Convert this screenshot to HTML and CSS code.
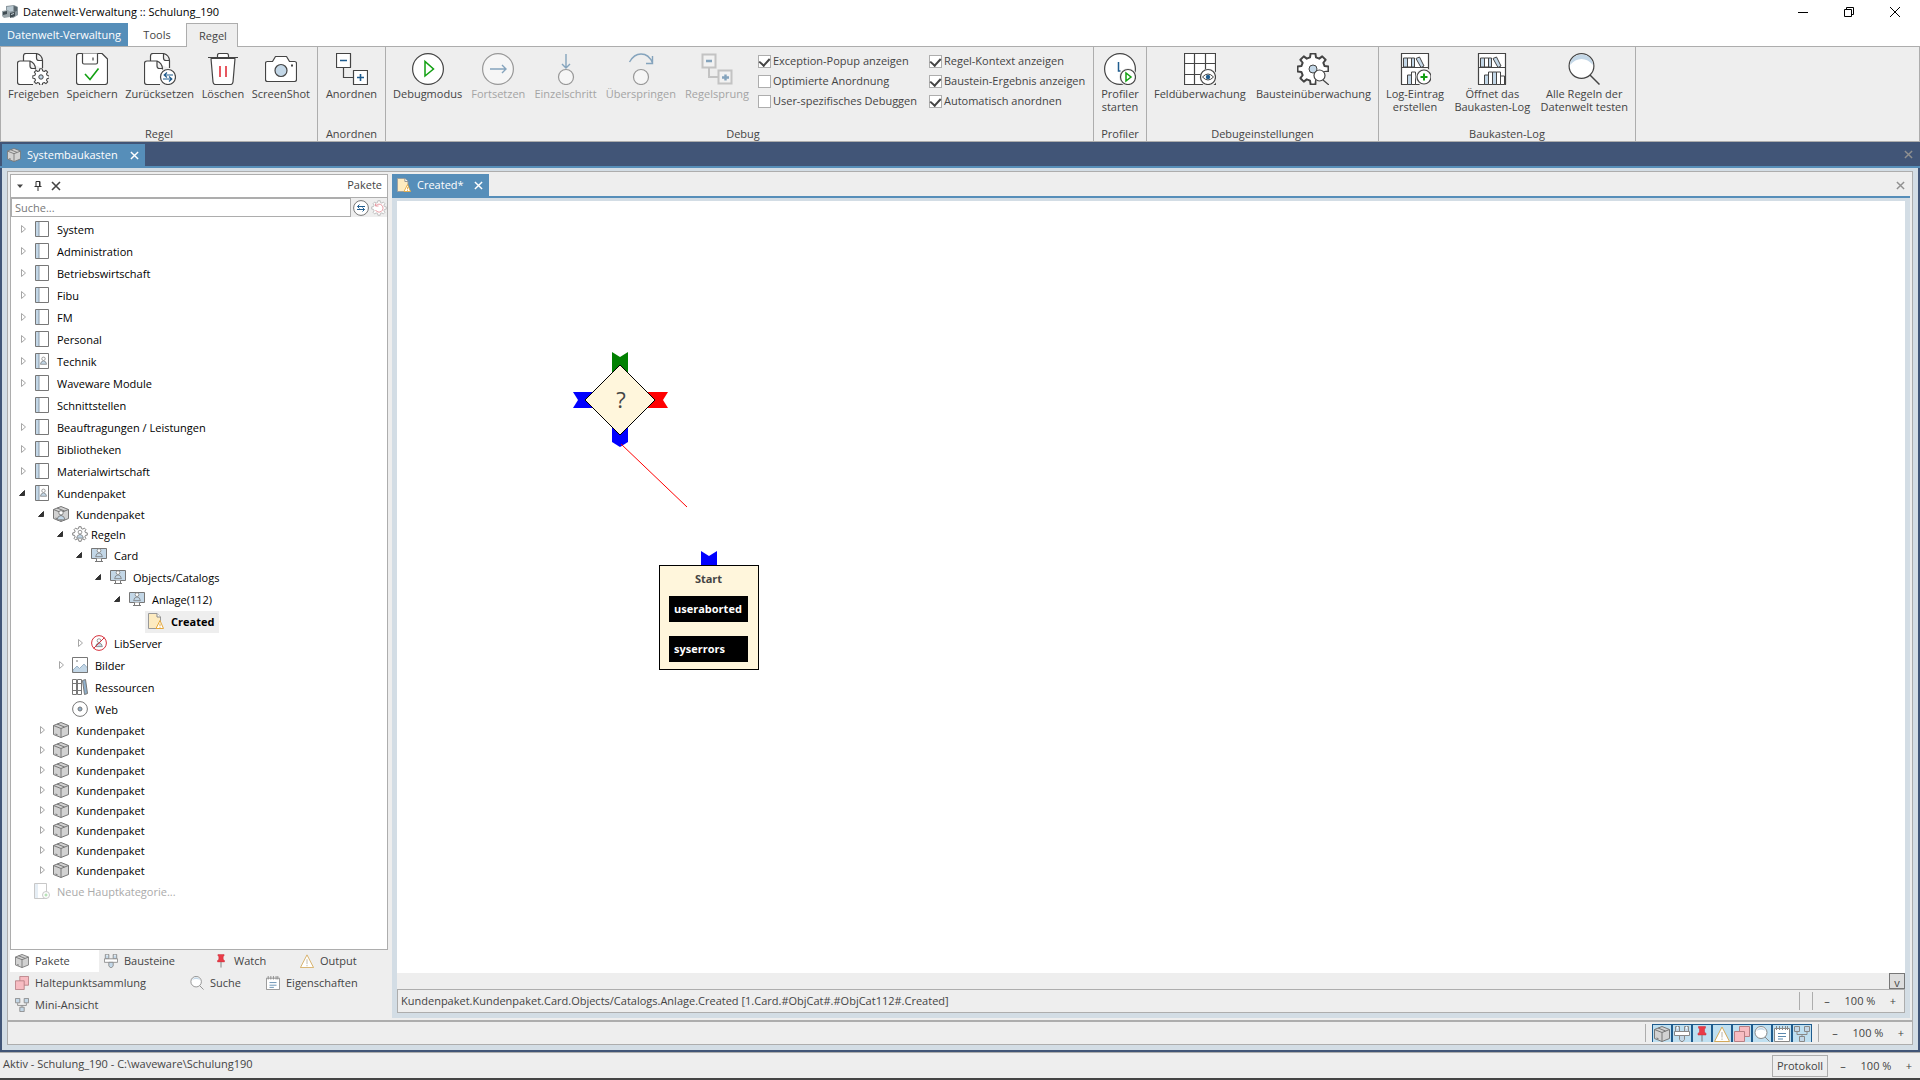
FILE: index.html
```html
<!DOCTYPE html>
<html lang="de">
<head>
  <meta charset="UTF-8">
  <meta name="viewport" content="width=device-width, initial-scale=1.0">
  <title>Datenwelt-Verwaltung :: Schulung_190</title>
  <link rel="stylesheet" href="styles.css">
</head>
<body>
  <!-- Icon sprite -->
  <svg class="sprite" aria-hidden="true">
    <symbol id="i-app" viewBox="0 0 16 16">
      <path d="M4 2l8-1 4 2v8l-5 3-7-3z" fill="#8b989f"/>
      <path d="M5 3l6-1v5L5 8z" fill="#b9c8d1"/>
      <path d="M12 2l3 1v4l-3 1z" fill="#5a676e"/>
      <path d="M0 7l6-1 2 2v5l-6 1-2-2z" fill="#9aa5aa"/>
      <path d="M1 8l4-1v3l-4 1zM8 9l5-1v4l-5 2z" fill="#3f4b52"/>
      <path d="M9 10l3-1v1l-3 1z" fill="#c9d4d9"/>
    </symbol>
    <symbol id="i-gear" viewBox="0 0 24 24">
      <path d="M9.9 3.8L10.3 1.1H13.7L14.1 3.8 16.4 4.7 18.5 3.1 20.9 5.5 19.3 7.6 20.2 9.9 22.9 10.3V13.7L20.2 14.1 19.3 16.4 20.9 18.5 18.5 20.9 16.4 19.3 14.1 20.2 13.7 22.9H10.3L9.9 20.2 7.6 19.3 5.5 20.9 3.1 18.5 4.7 16.4 3.8 14.1 1.1 13.7V10.3L3.8 9.9 4.7 7.6 3.1 5.5 5.5 3.1 7.6 4.7z" fill="#fff" stroke="currentColor" stroke-width="1.4" stroke-linejoin="round"/>
    </symbol>
    <symbol id="i-docs" viewBox="0 0 32 32">
      <path class="ln" d="M6.5 8V3q0-2.5 2.5-2.5H19.5q5.5 1.5 6 7V15M19.5.5V5q0 2.500 2.5 2.5h4M16 31.5H3q-2.5 0-2.5-2.5V10.5Q.5 8 3 8H13q5 2 5.5 7.5v1M13 8v5q0 2.5 2.5 2.5h3"/>
    </symbol>
    <symbol id="i-release" viewBox="0 0 32 32">
      <use href="#i-docs" width="32" height="32"/>
      <use href="#i-gear" x="15" y="15" width="18" height="18"/>
      <circle cx="24" cy="24" r="2.2" fill="#c3d7e7" stroke="#444"/>
    </symbol>
    <symbol id="i-save" viewBox="0 0 32 32">
      <path class="ln" d="M3 .5H26L31.5 6V29q0 2.5-2.5 2.5H3Q.5 31.5.5 29V3Q.5.5 3 .5z"/>
      <path class="ln" d="M6.5.5v9q0 1.5 1.5 1.5H20q1.5 0 1.5-1.5v-9M17 4.5v3"/>
      <path d="M9 21l5 5.5 8.500-11" fill="none" stroke="#12a012" stroke-width="1.6"/>
    </symbol>
    <symbol id="i-reset" viewBox="0 0 32 32">
      <use href="#i-docs" width="32" height="32"/>
      <circle class="ln" cx="24" cy="24" r="7.5"/>
      <path d="M29 22h-9m3-2.5L20.2 22l2.800 2.5M19 26h9m-3-2.5l2.8 2.5-2.8 2.5" fill="none" stroke="#1f5c8e" stroke-width="1.2"/>
    </symbol>
    <symbol id="i-trash" viewBox="0 0 32 32">
      <path class="ln" d="M4 5.5l2 23.500q.3 2.500 2.5 2.500h15q2.200 0 2.500-2.500l2-23.5z"/>
      <path class="ln" d="M1 4.5H31M10.5 4V2.5q0-2 2-2h7q2 0 2 2V4"/>
      <path d="M13 13v11M19 13v11" stroke="#e0202c" stroke-width="1.5"/>
    </symbol>
    <symbol id="i-camera" viewBox="0 0 32 32">
      <path class="ln" d="M2.5 8.5H7.5L10.5 3.5H21.5L24.5 8.5H29.5q2 0 2 2V26.5q0 2-2 2H2.5q-2 0-2-2V10.5q0-2 2-2z"/>
      <circle cx="16" cy="17.5" r="6" fill="#c3d7e7" stroke="#444" stroke-width="1.2"/>
      <path d="M26 12.5h2" stroke="#444" stroke-width="2"/>
    </symbol>
    <symbol id="i-arrange" viewBox="0 0 32 32">
      <path class="ln" d="M.5.5h14v14H.5zM17.5 17.5h14v14h-14z"/>
      <path d="M7.5 14.5v10h10" fill="none" stroke="#444" stroke-width="1.2"/>
      <path d="M4 7.5h7M21 24.5h7M24.5 21v7" stroke="#1f5c8e" stroke-width="1.6"/>
    </symbol>
    <symbol id="i-debug" viewBox="0 0 32 32">
      <circle class="ln" cx="16" cy="16" r="15.4"/>
      <path d="M13 8.5V23L21.5 16z" fill="none" stroke="#12a012" stroke-width="1.5"/>
    </symbol>
    <symbol id="i-continue" viewBox="0 0 32 32">
      <circle class="ln" cx="16" cy="16" r="15.4"/>
      <path d="M8 16H24M20 12l4 4-4 4" fill="none" stroke="#1f5c8e" stroke-width="1.4"/>
    </symbol>
    <symbol id="i-step" viewBox="0 0 32 32">
      <circle class="ln" cx="16" cy="24" r="7.5"/>
      <path d="M16 1V15M12 11l4 4 4-4" fill="none" stroke="#1f5c8e" stroke-width="1.4"/>
    </symbol>
    <symbol id="i-over" viewBox="0 0 32 32">
      <circle class="ln" cx="16" cy="24" r="7.5"/>
      <path d="M4.5 9Q9 1 16 1q8 0 11.5 9M27.5 3v7.5H21" fill="none" stroke="#1f5c8e" stroke-width="1.4"/>
    </symbol>
    <symbol id="i-jump" viewBox="0 0 32 32">
      <path d="M8 14.5V24h10" fill="none" stroke="#999" stroke-width="2"/>
      <path d="M1.5 1.5h13v13h-13zM17.5 17.5h13v13h-13z" fill="#f6f6f6" stroke="#999" stroke-width="2"/>
      <path d="M5 8h6M21 24.500h7M24.500 21.5v6" stroke="#1f5c8e" stroke-width="2.4"/>
    </symbol>
    <symbol id="i-profiler" viewBox="0 0 32 32">
      <circle class="ln" cx="16" cy="16" r="15.4"/>
      <path d="M14.5 9v9h2" fill="none" stroke="#1f5c8e" stroke-width="1.5"/>
      <circle cx="24" cy="24" r="9" fill="#eee"/>
      <circle class="ln" cx="24" cy="24" r="7.5"/>
      <path d="M22 20v8l5-4z" fill="none" stroke="#12a012" stroke-width="1.5"/>
    </symbol>
    <symbol id="i-grid" viewBox="0 0 32 32">
      <path class="ln" d="M.5.5h31v31H.5zM.5 10.5h31M.5 21.5h31M10.5.5v31M21.5.5v31"/>
      <circle cx="24.5" cy="24.5" r="9" fill="#eee"/>
      <circle class="ln" cx="24" cy="24" r="7.5"/>
      <path d="M18.5 24q5.5-6 11 0-5.500 6-11 0z" fill="#fff" stroke="#444"/>
      <circle cx="24" cy="24" r="2.2" fill="#1f5c8e"/>
    </symbol>
    <symbol id="i-gearwatch" viewBox="0 0 32 32">
      <use href="#i-gear" x="-1" y="-1" width="34" height="34"/>
      <circle cx="16" cy="16" r="4" fill="#c3d7e7" stroke="#444"/>
      <path d="M18 19h14v13H20z" fill="#eee"/>
      <path d="M26 27l6 5" stroke="#444" stroke-width="1.3"/>
      <circle class="ln" cx="22.5" cy="22.5" r="5.5"/>
    </symbol>
    <symbol id="i-shelf" viewBox="0 0 32 32">
      <path class="ln" d="M2.5.5h27v31h-27zM2.5 14.5h27"/>
      <path d="M4.5 5h4v9h-4zM12.5 5h3v9h-3zM17 5.5l3.5-1.5 4.5 9-3 1.5zM8.5 22h4v9.5h-4zM16.5 19h4v12.5h-4z" fill="#c3d7e7" stroke="#444"/>
      <path d="M8.5 5h4v9h-4zM12.5 19h4v12.5h-4zM20.5 19h4v12.5h-4zM24.5 23h4v8.5h-4z" fill="#fff" stroke="#444"/>
    </symbol>
    <symbol id="i-logadd" viewBox="0 0 32 32">
      <path class="ln" d="M2.5.5h27v31h-27zM2.5 14.5h27"/>
      <path d="M4.5 5h4v9h-4zM12.5 5h3v9h-3zM17 5.5l3.5-1.5 4.5 9-3 1.5zM8.5 22h4v9.5h-4z" fill="#c3d7e7" stroke="#444"/>
      <path d="M8.5 5h4v9h-4zM12.5 19h4v12.5h-4z" fill="#fff" stroke="#444"/>
      <circle cx="25.5" cy="24" r="9" fill="#eee"/>
      <circle class="ln" cx="25" cy="24" r="7"/>
      <path d="M21.5 24h7M25 20.5v7" stroke="#12a012" stroke-width="2"/>
    </symbol>
    <symbol id="i-search" viewBox="0 0 32 32">
      <circle cx="13.5" cy="13" r="12.4" fill="#fff" stroke="#444" stroke-width="1.2"/>
      <path d="M2 12Q3 2 13.5 1.5 24 2 25 12 20 6 13.5 6 7 6 2 12z" fill="#c3d7e7"/>
      <path d="M22 22l9.5 9.5" stroke="#444" stroke-width="1.5"/>
    </symbol>
    <symbol id="i-swap" viewBox="0 0 16 16">
      <circle cx="8" cy="8" r="7.4" fill="#fff" stroke="#777"/>
      <path d="M12 6.5H4.5M6.5 4.5l-2 2 2 2M4 9.5h7.5M9.5 7.5l2 2-2 2" fill="none" stroke="#1f5c8e"/>
    </symbol>
    <symbol id="i-reload" viewBox="0 0 16 16">
      <g color="#bbb"><use href="#i-gear" width="16" height="16"/></g>
      <path d="M5 5.5A4 4 0 1 1 4.5 10M4.5 3.5v2.5H7.5" fill="none" stroke="#e79aa2"/>
    </symbol>
    <symbol id="i-book" viewBox="0 0 16 16">
      <path d="M1.5.5h13v15h-13z" fill="#fff" stroke="#777"/>
      <path d="M2 1h3v14H2z" fill="#c3d7e7"/><path d="M5 1v14" stroke="#8a9aa8"/>
    </symbol>
    <symbol id="i-man" viewBox="0 0 16 16">
      <path d="M3.500 13.5Q4 9 8 8.5q4 .5 4.500 5z" fill="#c3d7e7" stroke="#777"/>
      <circle cx="8" cy="5.5" r="2.5" fill="#fff" stroke="#777"/>
    </symbol>
    <symbol id="i-bookman" viewBox="0 0 16 16">
      <use href="#i-book" width="16" height="16"/>
      <use href="#i-man" x="4" y="2" width="11" height="11"/>
    </symbol>
    <symbol id="i-box" viewBox="0 0 16 16">
      <path d="M.5 3.5L8 .5l7.5 3v9L8 15.5l-7.5-3z" fill="#d2d2d2" stroke="#777"/>
      <path d="M.5 3.5L8 6.5l7.5-3M8 6.5v9M4 2l7.5 3" fill="none" stroke="#777"/>
      <path d="M2.5 12l2 .7" stroke="#777"/>
    </symbol>
    <symbol id="i-boxman" viewBox="0 0 16 16">
      <use href="#i-box" width="16" height="16"/>
      <use href="#i-man" x="1" y="2" width="14" height="14"/>
    </symbol>
    <symbol id="i-gearman" viewBox="0 0 16 16">
      <g color="#777"><use href="#i-gear" width="16" height="16"/></g>
      <use href="#i-man" x="2" y="2" width="12" height="12"/>
    </symbol>
    <symbol id="i-screen" viewBox="0 0 16 16">
      <path d="M.5 1.5h15v10H.5z" fill="#c3d7e7" stroke="#777"/>
      <path d="M5.5 11.5v3h5v-3M4 14.5h8" fill="#fff" stroke="#777"/>
      <use href="#i-man" x="2" y="-1" width="12" height="13"/>
    </symbol>
    <symbol id="i-rule" viewBox="0 0 16 16">
      <path d="M.5.5H9l3.5 3.500v11.5H.5z" fill="#fdebc0" stroke="#999"/>
      <path d="M9 .5V4h3.5" fill="#fff" stroke="#888"/>
      <path d="M12 7.5l3.5 8h-7.5z" fill="#fff" stroke="#e5a83c"/>
      <path d="M12 10.5v2.5M12 13.7v1" stroke="#e5a83c"/>
    </symbol>
    <symbol id="i-noman" viewBox="0 0 16 16">
      <circle cx="8" cy="8" r="7.4" fill="#fff" stroke="#d6303c"/>
      <use href="#i-man" x="2" y="1" width="12" height="13"/>
      <path d="M2.5 13.5l11-11" stroke="#d6303c"/>
    </symbol>
    <symbol id="i-image" viewBox="0 0 16 16">
      <path d="M1 13l4-4 2.5 2.5L12 7l3.5 4v4.5H1z" fill="#c3d7e7" stroke="#9bb2c6"/>
      <path d="M.5.5h15v15H.5z" fill="none" stroke="#777"/>
      <path d="M4 4h2" stroke="#777"/>
    </symbol>
    <symbol id="i-books" viewBox="0 0 16 16">
      <path d="M.5.5h4v15h-4zM5.5.5h4v15h-4zM1 4.5h3.5M6 4.5h3.5M1 11.5h3.5M6 11.5h3.5" fill="#fff" stroke="#777"/>
      <path d="M10.5 1.5l3-1 2 14-3 1z" fill="#8fb0cc" stroke="#777"/>
    </symbol>
    <symbol id="i-web" viewBox="0 0 16 16">
      <circle cx="8" cy="8" r="7.4" fill="#fff" stroke="#777"/>
      <circle cx="8" cy="8" r="2" fill="#8fb0cc" stroke="#777"/>
    </symbol>
    <symbol id="i-newbook" viewBox="0 0 16 16">
      <path d="M.5.5h12v15H.5z" fill="#fff" stroke="#777"/>
      <path d="M1 1h3v14H1z" fill="#c3d7e7"/>
      <circle cx="12" cy="12" r="3.5" fill="#fff" stroke="#777"/>
      <path d="M10.5 12h3M12 10.5v3" stroke="#12a012"/>
    </symbol>
    <symbol id="i-blocks" viewBox="0 0 16 16">
      <path d="M1.5.5h4v5h-4zM10.5.5h4v5h-4z" fill="#c3d7e7" stroke="#888"/>
      <path d="M3 .5h1v2H3zM12 .5h1v2h-1z" fill="#fff"/>
      <path d="M.5 5.5h15v4H.5z" fill="#fff" stroke="#888"/>
      <path d="M5.5 9.5h5v4l-1.5 2H7l-1.5-2z" fill="#c3d7e7" stroke="#888"/>
    </symbol>
    <symbol id="i-pin" viewBox="0 0 16 16">
      <path d="M4.5.5h7v1.5l-1 1v3l1.5 1.5V9H4V7.5L5.5 6V3l-1-1z" fill="#ea3b47" stroke="#c42f3a" stroke-width=".5"/>
      <path d="M8 9v6.5" stroke="#777"/>
    </symbol>
    <symbol id="i-warn" viewBox="0 0 16 16">
      <path d="M8 1L15.5 15.5H.5z" fill="#fff" stroke="#d3a95a"/>
      <path d="M8 6v5.5M8 12.5v1.5" stroke="#b9b2a4"/>
    </symbol>
    <symbol id="i-breaks" viewBox="0 0 16 16">
      <path d="M5.5.5h10v10h-10z" fill="#f7bcc2" stroke="#b77f84"/>
      <path d="M.5 5.5h10v10H.5z" fill="#f7bcc2" stroke="#b77f84"/>
    </symbol>
    <symbol id="i-lens" viewBox="0 0 16 16">
      <path d="M11 11l4.5 4.5" stroke="#888"/>
      <circle cx="7" cy="6.5" r="6" fill="#fff" stroke="#888"/>
      <path d="M2 5q5-7 10 0-5-3-10 0z" fill="#c3d7e7"/>
    </symbol>
    <symbol id="i-props" viewBox="0 0 16 16">
      <path d="M.5 2.5h15v13H.5z" fill="#fff" stroke="#888"/>
      <path d="M2.5 0v4M5.5 0v4M8.5 0v4M11.5 0v4M13.5 0v4" stroke="#888"/>
      <path d="M4 7.5h8M4 10.5h8M4 13h5" stroke="#5b88ad"/>
    </symbol>
    <symbol id="i-mini" viewBox="0 0 16 16">
      <path d="M3 6v2.5h10V6M8 8.5V11" fill="none" stroke="#888"/>
      <path d="M.5.5h5v5h-5zM10.5.5h5v5h-5zM5.5 10.5h5v5h-5z" fill="#c3d7e7" stroke="#888"/>
    </symbol>
    <symbol id="i-x" viewBox="0 0 10 10"><path d="M1 1l8 8M9 1L1 9" stroke="currentColor" stroke-width="1.6"/></symbol>
    <symbol id="i-closed" viewBox="0 0 14 14"><path d="M5.5 3.5v7l4-3.5z" fill="#fff" stroke="#a6a6a6"/></symbol>
    <symbol id="i-open" viewBox="0 0 14 14"><path d="M8.5 4.5v5H3.500z" fill="#333" stroke="#333"/></symbol>
  </svg>

  <header class="titlebar">
    <svg class="icon"><use href="#i-app"/></svg>
    <h1 class="title">Datenwelt-Verwaltung :: Schulung_190</h1>
    <div class="window-buttons">
      <button aria-label="Minimieren"><svg viewBox="0 0 10 10"><path d="M0 5.5h10" stroke="#000"/></svg></button>
      <button aria-label="Wiederherstellen"><svg viewBox="0 0 10 10"><path d="M.5 2.5h7v7h-7zM2.5 2.5v-2h7v7h-2" fill="none" stroke="#000"/></svg></button>
      <button aria-label="Schließen"><svg viewBox="0 0 10 10"><path d="M0 0l10 10M10 0L0 10" stroke="#000"/></svg></button>
    </div>
  </header>

  <nav class="menu">
    <button class="menu-tab menu-main">Datenwelt-Verwaltung</button>
    <button class="menu-tab menu-tools">Tools</button>
    <button class="menu-tab menu-active">Regel</button>
  </nav>

  <div class="ribbon">
    <section class="group group-rule">
      <div class="tools">
        <button class="tool"><svg><use href="#i-release"/></svg>Freigeben</button>
        <button class="tool"><svg><use href="#i-save"/></svg>Speichern</button>
        <button class="tool"><svg><use href="#i-reset"/></svg>Zurücksetzen</button>
        <button class="tool"><svg><use href="#i-trash"/></svg>Löschen</button>
        <button class="tool"><svg><use href="#i-camera"/></svg>ScreenShot</button>
      </div>
      <h2>Regel</h2>
    </section>
    <section class="group group-arrange">
      <div class="tools">
        <button class="tool"><svg><use href="#i-arrange"/></svg>Anordnen</button>
      </div>
      <h2>Anordnen</h2>
    </section>
    <section class="group group-debug">
      <div class="tools">
        <button class="tool"><svg><use href="#i-debug"/></svg>Debugmodus</button>
        <button class="tool" disabled><svg><use href="#i-continue"/></svg>Fortsetzen</button>
        <button class="tool" disabled><svg><use href="#i-step"/></svg>Einzelschritt</button>
        <button class="tool" disabled><svg><use href="#i-over"/></svg>Überspringen</button>
        <button class="tool" disabled><svg><use href="#i-jump"/></svg>Regelsprung</button>
        <div class="checks">
          <label><input type="checkbox" checked>Exception-Popup anzeigen</label>
          <label><input type="checkbox" checked>Regel-Kontext anzeigen</label>
          <label><input type="checkbox">Optimierte Anordnung</label>
          <label><input type="checkbox" checked>Baustein-Ergebnis anzeigen</label>
          <label><input type="checkbox">User-spezifisches Debuggen</label>
          <label><input type="checkbox" checked>Automatisch anordnen</label>
        </div>
      </div>
      <h2>Debug</h2>
    </section>
    <section class="group group-profiler">
      <div class="tools">
        <button class="tool"><svg><use href="#i-profiler"/></svg>Profiler<br>starten</button>
      </div>
      <h2>Profiler</h2>
    </section>
    <section class="group group-watch">
      <div class="tools">
        <button class="tool"><svg><use href="#i-grid"/></svg>Feldüberwachung</button>
        <button class="tool"><svg><use href="#i-gearwatch"/></svg>Bausteinüberwachung</button>
      </div>
      <h2>Debugeinstellungen</h2>
    </section>
    <section class="group group-log">
      <div class="tools">
        <button class="tool"><svg><use href="#i-logadd"/></svg>Log-Eintrag<br>erstellen</button>
        <button class="tool"><svg><use href="#i-shelf"/></svg>Öffnet das<br>Baukasten-Log</button>
        <button class="tool"><svg><use href="#i-search"/></svg>Alle Regeln der<br>Datenwelt testen</button>
      </div>
      <h2>Baukasten-Log</h2>
    </section>
  </div>

  <div class="docbar">
    <div class="doc-tab">
      <svg class="icon-sm"><use href="#i-box"/></svg>
      <span>Systembaukasten</span>
      <button class="close" aria-label="Schließen"><svg><use href="#i-x"/></svg></button>
    </div>
    <button class="close close-all" aria-label="Alle schließen"><svg><use href="#i-x"/></svg></button>
  </div>

  <div class="workspace">
    <div class="frame">
      <div class="main">
        <aside class="sidebar">
          <div class="panel">
            <div class="panel-head">
              <button aria-label="Menü"><svg viewBox="0 0 10 10"><path d="M2 3.5h6L5 7z" fill="#444"/></svg></button>
              <button aria-label="Anheften"><svg viewBox="0 0 10 10"><path d="M3 .5h4v5H3zM1.5 5.5h7M5 5.5V10M6.5.5v5" fill="none" stroke="#333"/></svg></button>
              <button aria-label="Schließen"><svg><use href="#i-x"/></svg></button>
              <h2>Pakete</h2>
            </div>
            <div class="search">
              <input type="text" placeholder="Suche..." aria-label="Suche">
              <button aria-label="Wechseln"><svg class="icon"><use href="#i-swap"/></svg></button>
              <button aria-label="Neu laden"><svg class="icon"><use href="#i-reload"/></svg></button>
            </div>
            <ul class="tree">
              <li><svg class="arrow"><use href="#i-closed"/></svg><svg class="icon"><use href="#i-book"/></svg>System</li>
              <li><svg class="arrow"><use href="#i-closed"/></svg><svg class="icon"><use href="#i-book"/></svg>Administration</li>
              <li><svg class="arrow"><use href="#i-closed"/></svg><svg class="icon"><use href="#i-book"/></svg>Betriebswirtschaft</li>
              <li><svg class="arrow"><use href="#i-closed"/></svg><svg class="icon"><use href="#i-book"/></svg>Fibu</li>
              <li><svg class="arrow"><use href="#i-closed"/></svg><svg class="icon"><use href="#i-book"/></svg>FM</li>
              <li><svg class="arrow"><use href="#i-closed"/></svg><svg class="icon"><use href="#i-book"/></svg>Personal</li>
              <li><svg class="arrow"><use href="#i-closed"/></svg><svg class="icon"><use href="#i-bookman"/></svg>Technik</li>
              <li><svg class="arrow"><use href="#i-closed"/></svg><svg class="icon"><use href="#i-book"/></svg>Waveware Module</li>
              <li><svg class="arrow"></svg><svg class="icon"><use href="#i-book"/></svg>Schnittstellen</li>
              <li><svg class="arrow"><use href="#i-closed"/></svg><svg class="icon"><use href="#i-book"/></svg>Beauftragungen / Leistungen</li>
              <li><svg class="arrow"><use href="#i-closed"/></svg><svg class="icon"><use href="#i-book"/></svg>Bibliotheken</li>
              <li><svg class="arrow"><use href="#i-closed"/></svg><svg class="icon"><use href="#i-book"/></svg>Materialwirtschaft</li>
              <li><svg class="arrow"><use href="#i-open"/></svg><svg class="icon"><use href="#i-bookman"/></svg>Kundenpaket</li>
              <li class="l1 package"><svg class="arrow"><use href="#i-open"/></svg><svg class="icon"><use href="#i-boxman"/></svg>Kundenpaket</li>
              <li class="l2 package rules"><svg class="arrow"><use href="#i-open"/></svg><svg class="icon"><use href="#i-gearman"/></svg>Regeln</li>
              <li class="l3"><svg class="arrow"><use href="#i-open"/></svg><svg class="icon"><use href="#i-screen"/></svg>Card</li>
              <li class="l4"><svg class="arrow"><use href="#i-open"/></svg><svg class="icon"><use href="#i-screen"/></svg>Objects/Catalogs</li>
              <li class="l5"><svg class="arrow"><use href="#i-open"/></svg><svg class="icon"><use href="#i-screen"/></svg>Anlage(112)</li>
              <li class="l6"><span class="selected"><svg class="icon"><use href="#i-rule"/></svg>Created</span></li>
              <li class="l3"><svg class="arrow"><use href="#i-closed"/></svg><svg class="icon"><use href="#i-noman"/></svg>LibServer</li>
              <li class="l2"><svg class="arrow"><use href="#i-closed"/></svg><svg class="icon"><use href="#i-image"/></svg>Bilder</li>
              <li class="l2"><svg class="arrow"></svg><svg class="icon"><use href="#i-books"/></svg>Ressourcen</li>
              <li class="l2"><svg class="arrow"></svg><svg class="icon"><use href="#i-web"/></svg>Web</li>
              <li class="l1 package"><svg class="arrow"><use href="#i-closed"/></svg><svg class="icon"><use href="#i-box"/></svg>Kundenpaket</li>
              <li class="l1 package"><svg class="arrow"><use href="#i-closed"/></svg><svg class="icon"><use href="#i-box"/></svg>Kundenpaket</li>
              <li class="l1 package"><svg class="arrow"><use href="#i-closed"/></svg><svg class="icon"><use href="#i-box"/></svg>Kundenpaket</li>
              <li class="l1 package"><svg class="arrow"><use href="#i-closed"/></svg><svg class="icon"><use href="#i-box"/></svg>Kundenpaket</li>
              <li class="l1 package"><svg class="arrow"><use href="#i-closed"/></svg><svg class="icon"><use href="#i-box"/></svg>Kundenpaket</li>
              <li class="l1 package"><svg class="arrow"><use href="#i-closed"/></svg><svg class="icon"><use href="#i-box"/></svg>Kundenpaket</li>
              <li class="l1 package"><svg class="arrow"><use href="#i-closed"/></svg><svg class="icon"><use href="#i-box"/></svg>Kundenpaket</li>
              <li class="l1 package"><svg class="arrow"><use href="#i-closed"/></svg><svg class="icon"><use href="#i-box"/></svg>Kundenpaket</li>
              <li class="new"><svg class="arrow"></svg><svg class="icon"><use href="#i-newbook"/></svg>Neue Hauptkategorie...</li>
            </ul>
          </div>
          <div class="tabs tabs-first">
            <button class="active"><svg><use href="#i-box"/></svg>Pakete</button>
            <button><svg><use href="#i-blocks"/></svg>Bausteine</button>
            <button><svg><use href="#i-pin"/></svg>Watch</button>
            <button><svg><use href="#i-warn"/></svg>Output</button>
          </div>
          <div class="tabs tabs-second">
            <button><svg><use href="#i-breaks"/></svg>Haltepunktsammlung</button>
            <button><svg><use href="#i-lens"/></svg>Suche</button>
            <button><svg><use href="#i-props"/></svg>Eigenschaften</button>
          </div>
          <div class="tabs">
            <button><svg><use href="#i-mini"/></svg>Mini-Ansicht</button>
          </div>
        </aside>

        <section class="editor">
          <div class="editor-tabs">
            <div class="editor-tab">
              <svg class="icon-sm"><use href="#i-rule"/></svg>
              <span>Created*</span>
              <button class="close" aria-label="Schließen"><svg><use href="#i-x"/></svg></button>
            </div>
            <button class="close close-all" aria-label="Alle schließen"><svg><use href="#i-x"/></svg></button>
          </div>
          <div class="editor-body">
            <div class="canvas">
              <svg class="decision" viewBox="0 0 116 158">
                <path d="M39 2l8 5 8-5v22H39z" fill="#008000"/>
                <path d="M0 42h22v16H0l5-8z" fill="#00f"/>
                <path d="M95 42H73v16h22l-5-8z" fill="#f00"/>
                <path d="M39 74h16v18l-8 5-8-5z" fill="#00f"/>
                <path d="M47 15l35 35-35 35-35-35z" fill="#fff6dc" stroke="#000"/>
                <path d="M48 94l66 63" stroke="#f00"/>
                <text x="48" y="58">?</text>
              </svg>
              <svg class="input-flag" viewBox="0 0 16 14"><path d="M0 0l8 5 8-5v14H0z" fill="#00f"/></svg>
              <div class="node">
                <h3>Start</h3>
                <span>useraborted</span>
                <span>syserrors</span>
              </div>
            </div>
            <div class="canvas-foot"><button aria-label="Ausklappen">v</button></div>
            <div class="editor-status">
              <span class="path">Kundenpaket.Kundenpaket.Card.Objects/Catalogs.Anlage.Created [1.Card.#ObjCat#.#ObjCat112#.Created]</span>
              <div class="divided"></div>
              <div class="zoom"><button>–</button><span>100 %</span><button>+</button></div>
            </div>
          </div>
        </section>
      </div>
      <div class="strip">
        <div class="toggles">
          <button aria-label="Pakete"><svg><use href="#i-box"/></svg></button>
          <button aria-label="Bausteine"><svg><use href="#i-blocks"/></svg></button>
          <button aria-label="Watch"><svg><use href="#i-pin"/></svg></button>
          <button aria-label="Output"><svg><use href="#i-warn"/></svg></button>
          <button aria-label="Haltepunktsammlung"><svg><use href="#i-breaks"/></svg></button>
          <button aria-label="Suche"><svg><use href="#i-lens"/></svg></button>
          <button aria-label="Eigenschaften"><svg><use href="#i-props"/></svg></button>
          <button aria-label="Mini-Ansicht"><svg><use href="#i-mini"/></svg></button>
        </div>
        <div class="zoom"><button>–</button><span>100 %</span><button>+</button></div>
      </div>
    </div>
  </div>

  <footer class="statusbar">
    <span class="state">Aktiv - Schulung_190 - C:\waveware\Schulung190</span>
    <button class="protocol">Protokoll</button>
    <div class="zoom"><button>–</button><span>100 %</span><button>+</button></div>
  </footer>
</body>
</html>
```
FILE: styles.css
```css
* {
  box-sizing: border-box;
}

body {
  margin: 0;
  height: 100vh;
  display: flex;
  flex-direction: column;
  background: #fff;
  color: #444;
  font-family: "Open Sans", "Noto Sans", sans-serif;
  font-size: 11px;
  line-height: 16px;
  overflow: hidden;
}

button {
  margin: 0;
  padding: 0;
  border: 0;
  background: none;
  color: inherit;
  font: inherit;
  white-space: nowrap;
}

h1, h2, h3, ul {
  margin: 0;
  padding: 0;
  font: inherit;
}

svg {
  display: block;
  flex: none;
}

.sprite {
  position: absolute;
  width: 0;
  height: 0;
}

.ln {
  fill: #fff;
  stroke: #444;
  stroke-width: 1.2px;
  stroke-linejoin: round;
}

.icon {
  width: 16px;
  height: 16px;
}

.icon-sm {
  width: 14px;
  height: 14px;
}

/* Title bar */
.titlebar {
  display: flex;
  align-items: center;
  gap: 5px;
  height: 23px;
  padding: 0 2px;
}

.title {
  color: #000;
}

.window-buttons {
  display: flex;
  margin-left: auto;
}

.window-buttons button {
  width: 46px;
  height: 20px;
  padding: 0 18px;
}

.window-buttons svg {
  width: 10px;
  height: 10px;
}

/* Menu */
.menu {
  display: flex;
  height: 24px;
  border-bottom: 1px solid #adadad;
}

.menu-tab {
  height: 23px;
  padding: 0 15px;
  line-height: 24px;
}

.menu-main {
  width: 128px;
  padding: 0 5px;
  background: #568eb9;
  color: #fff;
}

.menu-tools {
  width: 58px;
}

.menu-active {
  width: 52px;
  height: 24px;
  padding: 0 12px;
  border: 1px solid #adadad;
  border-bottom: 0;
  background: #eee;
}

/* Ribbon */
.ribbon {
  display: flex;
  height: 95px;
  background: #eee;
  border: solid #adadad;
  border-width: 0 1px 1px;
}

.group {
  display: flex;
  flex-direction: column;
  justify-content: space-between;
  padding: 6px 7px 0;
  border-right: 1px solid #adadad;
  text-align: center;
}

.group h2 {
  line-height: 14px;
}

.tools {
  display: flex;
  justify-content: space-between;
}

.tool {
  display: flex;
  flex-direction: column;
  align-items: center;
  line-height: 13px;
}

.tool svg {
  width: 32px;
  height: 32px;
  margin-bottom: 2px;
}

.tool:disabled {
  color: #a4a4a4;
}

.tool:disabled svg {
  opacity: 0.5;
}

.group-rule {
  width: 317px;
}

.group-arrange {
  width: 68px;
}

.group-arrange .tools,
.group-profiler .tools {
  justify-content: center;
}

.group-debug {
  width: 708px;
  padding-right: 0;
}

.group-profiler {
  width: 53px;
}

.group-watch {
  width: 232px;
}

.group-log {
  width: 257px;
}

.checks {
  display: grid;
  grid-template-columns: 171px 164px;
  text-align: left;
}

.checks label {
  display: flex;
  align-items: center;
  gap: 2px;
  height: 20px;
  padding-bottom: 4px;
  white-space: nowrap;
}

.checks input {
  appearance: none;
  display: grid;
  place-items: center;
  width: 13px;
  height: 13px;
  margin: 0;
  border: 1px solid #adadad;
  background: #fff;
}

.checks input:checked::before {
  content: "";
  width: 5px;
  height: 8px;
  border: solid #444;
  border-width: 0 2px 2px 0;
  transform: rotate(42deg);
  margin-bottom: 3px;
}

/* Document bar */
.docbar {
  display: flex;
  align-items: flex-end;
  height: 26px;
  padding: 0 6px 0 2px;
  background: #415577;
  border-bottom: 2px solid #568eb9;
}

.doc-tab,
.editor-tab {
  display: flex;
  align-items: center;
  height: 22px;
  padding: 0 5px;
  background: #568eb9;
  color: #fff;
}

.doc-tab {
  width: 143px;
  gap: 6px;
}

.close {
  width: 11px;
  height: 11px;
  margin-left: auto;
  padding: 1px;
}

.close svg {
  width: 9px;
  height: 9px;
}

.close-all {
  align-self: center;
  color: #909090;
}

/* Workspace */
.workspace {
  flex: 1;
  min-height: 0;
  display: flex;
  padding: 3px 5px 5px;
  background: #d3dde5;
  border: solid #415577;
  border-width: 0 2px 2px;
}

.frame {
  flex: 1;
  min-width: 0;
  display: flex;
  flex-direction: column;
  border: 1px solid #adadad;
  background: #eee;
}

.main {
  flex: 1;
  min-height: 0;
  display: flex;
  gap: 4px;
  padding: 2px;
}

.sidebar {
  width: 378px;
  display: flex;
  flex-direction: column;
  padding-bottom: 2px;
}

.panel {
  flex: 1;
  min-height: 0;
  background: #fff;
  border: 1px solid #adadad;
}

.panel-head {
  display: flex;
  align-items: center;
  gap: 8px;
  height: 23px;
  padding: 0 5px 0 4px;
  border-bottom: 1px solid #adadad;
}

.panel-head svg {
  width: 10px;
  height: 10px;
}

.panel-head h2 {
  margin-left: auto;
  padding-bottom: 2px;
}

.search {
  display: flex;
  align-items: center;
  gap: 2px;
  height: 19px;
  background: #eee;
}

.search input {
  flex: 1;
  min-width: 0;
  height: 19px;
  padding: 0 3px;
  border: 1px solid #adadad;
  background: #fff;
  font: inherit;
}

.search input::placeholder {
  color: #777;
}

.tree {
  padding-top: 2px;
  list-style: none;
  color: #000;
}

.tree li {
  display: flex;
  align-items: center;
  height: 22px;
  padding-left: 5px;
}

.tree .arrow {
  width: 14px;
  height: 14px;
  margin: 0 4px 2px 0;
}

.tree .icon {
  margin: 0 7px 2px 0;
}

.tree .package {
  height: 20px;
}

.tree .rules .icon {
  margin-right: 3px;
}

.tree .l1 { padding-left: 24px; }
.tree .l2 { padding-left: 43px; }
.tree .l3 { padding-left: 62px; }
.tree .l4 { padding-left: 81px; }
.tree .l5 { padding-left: 100px; }
.tree .l6 { padding-left: 134px; }

.tree .selected {
  display: flex;
  align-items: center;
  height: 22px;
  padding: 0 5px 0 3px;
  background: #eee;
  font-weight: bold;
}

.tree .new {
  color: #aaa;
}

.tree .new .icon {
  opacity: 0.4;
}

.tabs {
  display: grid;
}

.tabs-first {
  grid-template-columns: 89px 110px 86px 1fr;
}

.tabs-second {
  grid-template-columns: 175px 76px 1fr;
}

.tabs button {
  display: flex;
  align-items: center;
  gap: 6px;
  height: 22px;
  padding-left: 5px;
}

.tabs .active {
  background: #fff;
}

.tabs svg {
  width: 14px;
  height: 14px;
}

/* Editor */
.editor {
  flex: 1;
  min-width: 0;
  display: flex;
  flex-direction: column;
}

.editor-tabs {
  display: flex;
  height: 24px;
  padding-right: 4px;
  border-bottom: 2px solid #568eb9;
}

.editor-tab {
  width: 97px;
  gap: 6px;
}

.editor-body {
  flex: 1;
  min-height: 0;
  display: flex;
  flex-direction: column;
  padding: 3px 5px 5px;
  background: #d3dde5;
}

.canvas {
  position: relative;
  flex: 1;
  background: #fff;
  overflow: hidden;
}

/* diagram nodes sit at free positions on the canvas */
.decision {
  position: absolute;
  left: 176px;
  top: 149px;
  width: 116px;
  height: 158px;
}

.decision text {
  fill: #444;
  font-size: 22px;
  text-anchor: middle;
}

.input-flag {
  position: absolute;
  left: 304px;
  top: 350px;
  width: 16px;
  height: 14px;
}

.node {
  position: absolute;
  left: 262px;
  top: 364px;
  width: 100px;
  height: 105px;
  padding: 5px 10px 0 9px;
  background: #fff6dc;
  border: 1px solid #000;
  font-weight: bold;
}

.node h3 {
  margin-bottom: 9px;
  text-align: center;
}

.node span {
  display: block;
  height: 26px;
  margin-bottom: 14px;
  padding-left: 5px;
  background: #000;
  color: #fff;
  line-height: 26px;
}

.canvas-foot {
  display: flex;
  justify-content: flex-end;
  height: 16px;
  background: #eee;
}

.canvas-foot button {
  width: 16px;
  height: 16px;
  border: 1px solid #777;
  background: #ddd;
  line-height: 18px;
}

.editor-status {
  display: flex;
  align-items: center;
  height: 24px;
  padding: 0 4px 0 3px;
  border: 1px solid #adadad;
  background: #eee;
}

.editor-status .path {
  flex: 1;
}

.divided {
  width: 14px;
  height: 18px;
  border: solid #adadad;
  border-width: 0 1px;
}

.zoom {
  display: flex;
  align-items: center;
}

.zoom button {
  width: 14px;
}

.zoom span {
  width: 52px;
  text-align: center;
}

.editor-status .zoom {
  padding-left: 7px;
}

.strip {
  display: flex;
  justify-content: flex-end;
  align-items: center;
  height: 24px;
  padding-right: 4px;
  border-top: 2px solid #adadad;
}

.toggles {
  display: flex;
  height: 18px;
  padding: 0 6px;
  border: solid #adadad;
  border-width: 0 1px;
}

.toggles button {
  width: 20px;
  height: 18px;
  border: solid #1f5c8e;
  border-width: 1px 1px 0;
  background: #bfdff0;
}

.toggles svg {
  width: 16px;
  height: 16px;
  margin: 1px;
}

.strip .zoom {
  padding-left: 9px;
}

/* Status bar */
.statusbar {
  display: flex;
  align-items: center;
  height: 28px;
  padding: 0 4px 0 3px;
  background: #eee;
  border-top: 1px solid #adadad;
  border-bottom: 2px solid #444;
}

.statusbar .state {
  flex: 1;
  padding-bottom: 3px;
}

.protocol {
  width: 56px;
  height: 22px;
  margin-right: 8px;
  border: 1px solid #adadad;
}
```
